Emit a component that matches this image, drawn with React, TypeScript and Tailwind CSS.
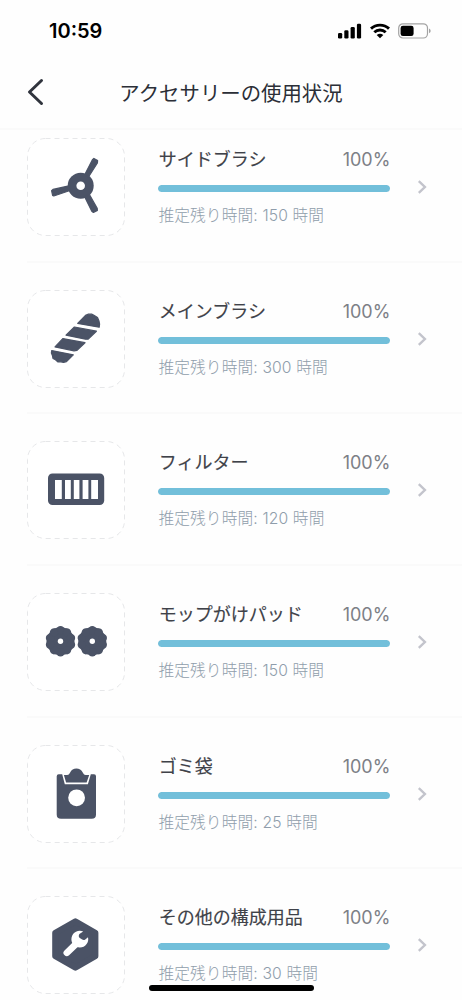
import type { ReactNode } from "react";

interface Accessory {
  name: string;
  percent: number;
  hours: number;
  icon: ReactNode;
}

const PETALS = [0, 36, 72, 108, 144, 180, 216, 252, 288, 324];

function SideBrushIcon() {
  return (
    <>
      <circle cx="53.7" cy="47.7" r="13" />
      <g stroke="#4b5366" strokeWidth="1.2" strokeLinejoin="round">
        <path d="M57.6 37 65.4 21.8 66.9 20.4 70.6 22.6 70.4 25 61.5 39z" />
        <path d="M24.6 52.6 25.6 57.4 26.8 58 43 52.5 43 47.6 26 51.4z" />
        <path d="M57.5 58.5 64.8 73.3 66.4 74.5 70.4 72.4 70.2 70.4 62.4 56.5z" />
      </g>
      <circle cx="53.7" cy="47.7" r="4.3" fill="#fff" />
    </>
  );
}

function MainBrushIcon() {
  return (
    <g stroke="#4b5366" strokeWidth="1.2" strokeLinejoin="round">
      <path d="M50.7 33.4 58.5 25.4 61 24.2 65 24.2 67.3 25.6 70.5 27.6 72 31 72.6 34 72.2 37.2z" />
      <path d="M47.4 37 69.4 41.2 61 49.2 58.5 49.2 39 45.2z" />
      <path d="M35.8 48.6 58 52.7 50 60.4 47 60.8 28 56.9z" />
      <path d="M24.7 60.6 46.3 64.8 39.5 71.6 36.5 72.4 34 71.8 31 72 28.5 69.8 26 68.5 25.4 65.5 24.4 63z" />
    </g>
  );
}

function FilterIcon() {
  return (
    <>
      <rect x="21" y="32.4" width="56.2" height="31.6" rx="4.5" />
      <g fill="#fff">
        <rect x="28" y="39" width="6.8" height="19" />
        <rect x="38" y="39" width="5.8" height="19" />
        <rect x="46.8" y="39" width="5.6" height="19" />
        <rect x="55.6" y="39" width="5.8" height="19" />
        <rect x="64.2" y="39" width="6.8" height="19" />
      </g>
    </>
  );
}

function MopPadIcon() {
  return (
    <>
      {[33.5, 65.3].map((cx) => (
        <g key={cx}>
          <circle cx={cx} cy="48.3" r="14" />
          {PETALS.map((a) => (
            <circle key={a} cx={cx} cy="37.3" r="4.2" transform={`rotate(${a} ${cx} 48.3)`} />
          ))}
          <circle cx={cx} cy="48.3" r="2.7" fill="#fff" />
        </g>
      ))}
    </>
  );
}

function DustBagIcon() {
  return (
    <>
      <path d="M31.7 29.2H35.2L37.8 39.2H60.9L63.8 29.2H67Q69 29.2 69 31.2V69.5Q69 73.8 64.7 73.8H34Q29.7 73.8 29.7 69.5V31.2Q29.7 29.2 31.7 29.2z" />
      <path d="M36.9 30H40.2Q42 30 43 27.8C44.4 24.8 46.6 23.5 49.4 23.5S54.4 24.8 55.9 27.8Q56.8 30 58.6 30H62.2L59.6 37.4H39.1z" />
      <circle cx="49.6" cy="52.8" r="8.4" fill="#fff" />
    </>
  );
}

function ToolIcon() {
  return (
    <>
      <path
        d="M48.4 25.3 68.4 36.8V60.2L48.4 71.7 28.2 60.2V36.8z"
        stroke="#4b5366"
        strokeWidth="6"
        strokeLinejoin="round"
      />
      <path d="M49.5 47.5 39.8 56.8" stroke="#fff" strokeWidth="6.6" strokeLinecap="round" />
      <path
        d="M56.2 35.4A8.4 8.4 0 1 0 61 41.2L58.3 43.4Q56.8 44.4 55.2 43.6L52.8 42Q51.5 41 51.8 39.4L52.4 38z"
        fill="#fff"
      />
    </>
  );
}

const ACCESSORIES: Accessory[] = [
  { name: "サイドブラシ", percent: 100, hours: 150, icon: <SideBrushIcon /> },
  { name: "メインブラシ", percent: 100, hours: 300, icon: <MainBrushIcon /> },
  { name: "フィルター", percent: 100, hours: 120, icon: <FilterIcon /> },
  { name: "モップがけパッド", percent: 100, hours: 150, icon: <MopPadIcon /> },
  { name: "ゴミ袋", percent: 100, hours: 25, icon: <DustBagIcon /> },
  { name: "その他の構成用品", percent: 100, hours: 30, icon: <ToolIcon /> },
];

function StatusBar() {
  return (
    <div className="flex h-[61px] items-center justify-between pl-[49px] pr-[31px]">
      <span className="text-[20px] font-semibold leading-6 text-black">10:59</span>
      <div className="flex items-center gap-[8px]">
        <svg width="24" height="16" viewBox="0 0 24 16">
          <rect x="0" y="10" width="4.2" height="5.5" rx="1.3" />
          <rect x="6.3" y="7.3" width="4.2" height="8.2" rx="1.3" />
          <rect x="12.6" y="4" width="4.2" height="11.5" rx="1.3" />
          <rect x="18.9" y="0.8" width="4.2" height="14.7" rx="1.3" />
        </svg>
        <svg width="20" height="16" viewBox="0 0 20 16">
          <g fill="none" stroke="#000" strokeWidth="2.9">
            <path d="M1 5.6C6 .9 14 .9 19 5.6" />
            <path d="M4.3 9.3C7.5 6.3 12.5 6.3 15.7 9.3" />
          </g>
          <path d="M10 15.2 6.7 12Q10 9.4 13.3 12z" />
        </svg>
        <svg width="33" height="16" viewBox="0 0 33 16">
          <rect x="0.7" y="0.8" width="28.8" height="14.2" rx="4.2" fill="none" stroke="#a3a3a3" strokeWidth="1.2" />
          <rect x="2.6" y="2.7" width="13" height="10.4" rx="2.3" />
          <path d="M31 5.6Q32.7 6.4 32.7 7.9T31 10.3z" fill="#a3a3a3" />
        </svg>
      </div>
    </div>
  );
}

function AccessoryRow({ item }: { item: Accessory }) {
  return (
    <li className="ml-[27px] flex h-[151.7px] shrink-0 items-start border-b-2 border-[#fafafa]">
      <div className="mt-[27px] size-[98px] shrink-0">
        <svg width="98" height="98" viewBox="0 0 98 98" fill="#4b5366">
          <rect x="0.5" y="0.5" width="97" height="97" rx="18" fill="#fff" stroke="#e6e7e9" strokeDasharray="5 4" />
          {item.icon}
        </svg>
      </div>
      <div className="ml-[33.4px] w-[232px] shrink-0 pt-[37px]">
        <div className="flex h-6 items-center justify-between whitespace-nowrap pl-[0.4px] text-[18px] leading-6">
          <span className="text-[#3f4249] [-webkit-text-stroke:0.15px_#3f4249]">{item.name}</span>
          <span className="text-[#7d8086]">{item.percent}%</span>
        </div>
        <div className="mt-[13px] h-[7px] overflow-hidden rounded-full bg-[#e8eef1]">
          <div className="h-full rounded-full bg-[#72bfda]" style={{ width: `${item.percent}%` }} />
        </div>
        <p className="mt-[12px] whitespace-nowrap text-[15.7px] font-light leading-6 tracking-[0.13px] text-[#8f9dab]">
          推定残り時間: {item.hours} 時間
        </p>
      </div>
      <svg className="ml-[27px] mt-[69px]" width="10" height="14" viewBox="0 0 10 14" fill="none" stroke="#c3c4cc" strokeWidth="2.4">
        <path d="M1.8 1.2 7.9 7 1.8 12.8" />
      </svg>
    </li>
  );
}

export default function App() {
  return (
    <div className="relative h-[1000px] w-[462px] overflow-hidden bg-[#fefefe] font-['Inter','Noto_Sans_CJK_JP',sans-serif]">
      <header className="relative z-10 h-[130px] border-b-2 border-[#fafafa] bg-[#fefefe]">
        <StatusBar />
        <div className="grid h-[62px] grid-cols-[119px_1fr_119px] items-center">
          <button className="pl-[27px]" aria-label="戻る">
            <svg width="18" height="28" viewBox="0 0 18 28" fill="none" stroke="#30343d" strokeWidth="3" strokeLinecap="round" strokeLinejoin="round">
              <path d="M14.5 2.5 2.5 14 14.5 25.5" />
            </svg>
          </button>
          <h1 className="whitespace-nowrap pt-[4px] text-center text-[20.4px] leading-7 text-[#2b2f37]">アクセサリーの使用状況</h1>
        </div>
      </header>
      <ul className="-mt-[19px] flex flex-col">
        {ACCESSORIES.map((item) => (
          <AccessoryRow key={item.name} item={item} />
        ))}
      </ul>
      {/* Home indicator */}
      <div className="absolute bottom-[9.5px] left-[149px] z-20 h-[6px] w-[165px] rounded-full bg-black" />
    </div>
  );
}
